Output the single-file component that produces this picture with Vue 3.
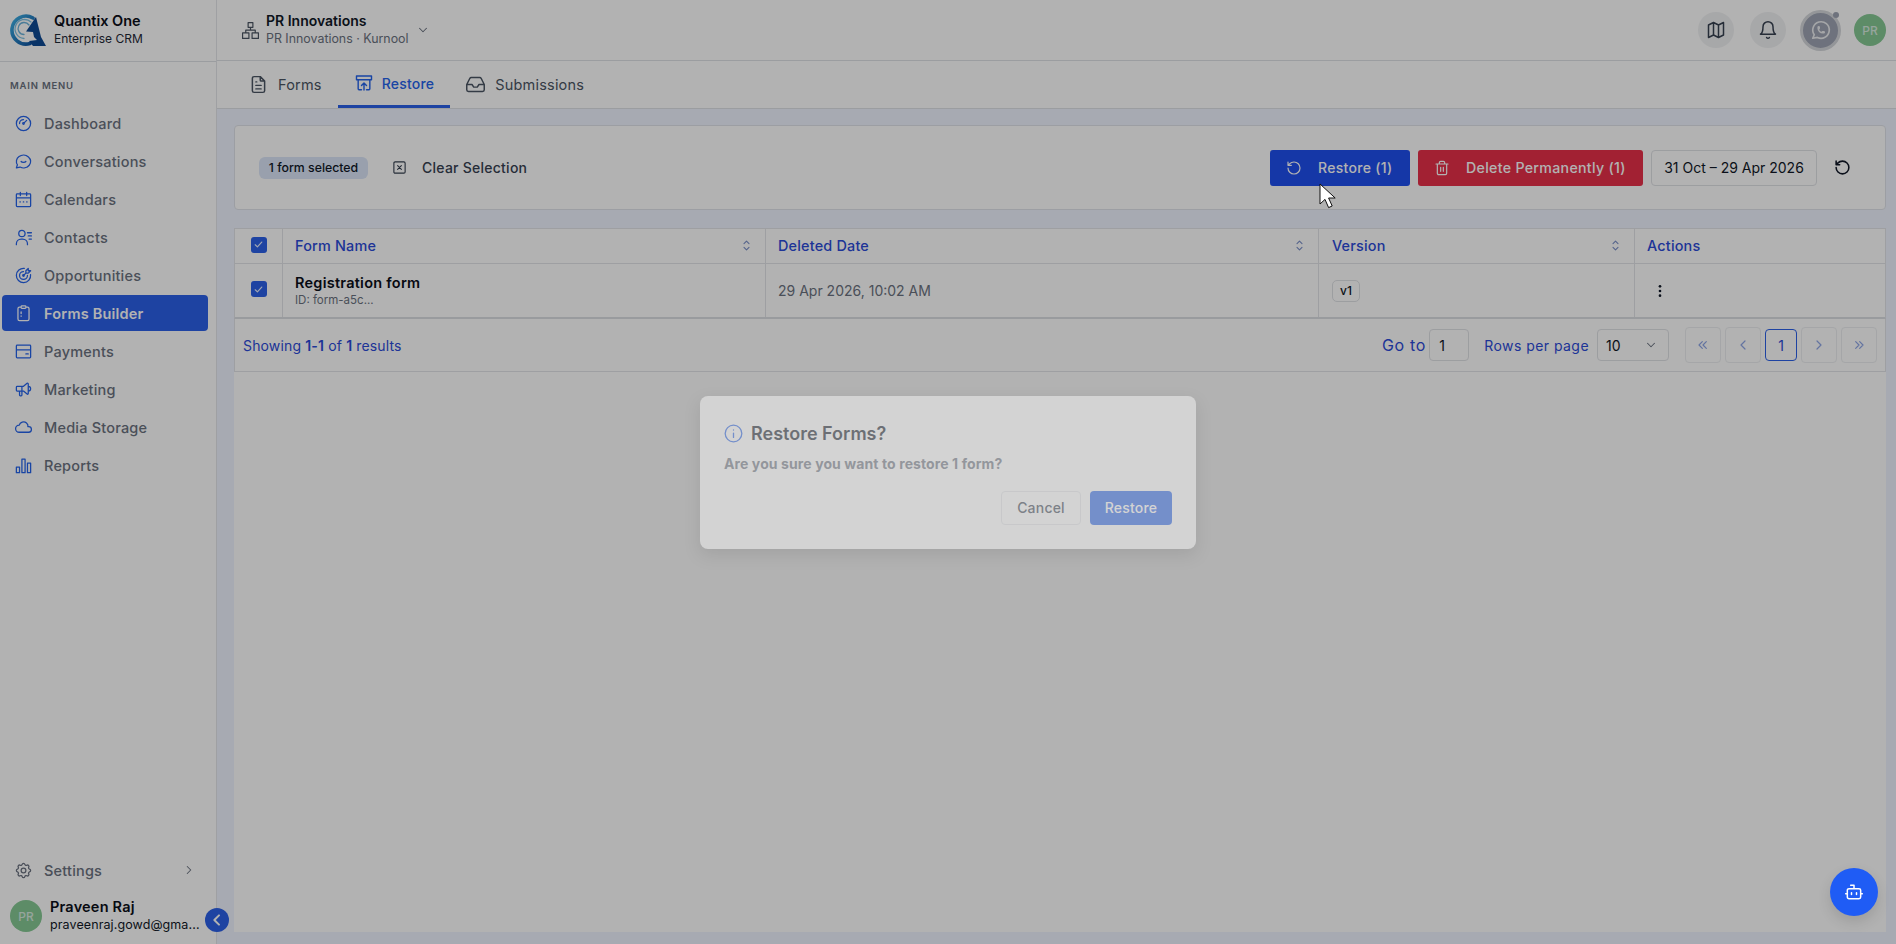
<script setup>
const menu = [
  { label: 'Dashboard', d: 'M12 12m-9 0a9 9 0 1 0 18 0a9 9 0 1 0 -18 0 M12 12m-1 0a1 1 0 1 0 2 0a1 1 0 1 0 -2 0 M13.41 10.59l2.59 -2.59 M7 12a5 5 0 0 1 5 -5' },
  { label: 'Conversations', d: 'M3 20l1.3 -3.9c-2.324 -3.437 -1.426 -7.872 2.1 -10.374c3.526 -2.501 8.59 -2.296 11.845 .48c3.255 2.777 3.695 7.266 1.029 10.501c-2.666 3.235 -7.615 4.215 -11.574 2.293l-4.7 1 M9 12c1 1.3 5 1.3 6 0' },
  { label: 'Calendars', d: 'M4 5h16a1 1 0 0 1 1 1v14a1 1 0 0 1 -1 1h-16a1 1 0 0 1 -1 -1v-14a1 1 0 0 1 1 -1z M3 10h18 M8 3v4 M16 3v4 M7.5 15h.5 M11.75 15h.5 M16 15h.5' },
  { label: 'Contacts', d: 'M10 7m-4 0a4 4 0 1 0 8 0a4 4 0 1 0 -8 0 M3 21v-1a6 6 0 0 1 6 -6h2a6 6 0 0 1 6 6v1 M17 6h5 M18 10h4 M19 14h3' },
  { label: 'Opportunities', d: 'M12 12m-1 0a1 1 0 1 0 2 0a1 1 0 1 0 -2 0 M12 7a5 5 0 1 0 5 5 M13 3.055a9 9 0 1 0 7.941 7.945 M15 6v3h3l3 -3h-3v-3z M15 9l-3 3' },
  { label: 'Forms Builder', active: true, d: 'M9 4h-2a2 2 0 0 0 -2 2v13a2 2 0 0 0 2 2h10a2 2 0 0 0 2 -2v-13a2 2 0 0 0 -2 -2h-2 M10 2.5h4a1 1 0 0 1 1 1v1a1 1 0 0 1 -1 1h-4a1 1 0 0 1 -1 -1v-1a1 1 0 0 1 1 -1z M9 10v2 M9 15v.5' },
  { label: 'Payments', d: 'M4 4h16a1 1 0 0 1 1 1v14a1 1 0 0 1 -1 1h-16a1 1 0 0 1 -1 -1v-14a1 1 0 0 1 1 -1z M3 10h18 M15 15h3' },
  { label: 'Marketing', d: 'M18 8a3 3 0 0 1 0 6 M10 8v11a1 1 0 0 1 -1 1h-1a1 1 0 0 1 -1 -1v-5 M12 8l4.524 -3.77a.9 .9 0 0 1 1.476 .692v12.156a.9 .9 0 0 1 -1.476 .692l-4.524 -3.77h-8a1 1 0 0 1 -1 -1v-4a1 1 0 0 1 1 -1h8' },
  { label: 'Media Storage', d: 'M6.657 18c-2.572 0 -4.657 -2.007 -4.657 -4.483c0 -2.475 2.085 -4.482 4.657 -4.482c.393 -1.762 1.794 -3.2 3.675 -3.773c1.88 -.572 3.956 -.193 5.444 1c1.488 1.19 2.162 3.007 1.77 4.769h.99c1.913 0 3.464 1.56 3.464 3.486c0 1.927 -1.551 3.487 -3.465 3.487h-11.878' },
  { label: 'Reports', d: 'M3 14h4v7h-4z M10 4h4v17h-4z M17 9h4v12h-4z' },
]

const sortIcon = 'M8 9l4 -4l4 4 M16 15l-4 4l-4 -4'
const columns = [
  { label: 'Form Name', sort: true },
  { label: 'Deleted Date', sort: true },
  { label: 'Version', sort: true },
  { label: 'Actions', sort: false },
]
</script>

<template>
  <div class="page">
    <aside class="sidebar">
      <div class="brand">
        <svg class="logo" viewBox="0 0 36 32" fill="none">
          <defs>
            <linearGradient id="lg" x1="0" y1="0" x2="1" y2="1">
              <stop offset="0" stop-color="#3fb4e8" />
              <stop offset="1" stop-color="#0d4f9e" />
            </linearGradient>
          </defs>
          <path d="M23 4A14 14 0 1 0 20 29.5" stroke="url(#lg)" stroke-width="3.6" />
          <path d="M21 8A9.5 9.5 0 1 0 14 24.5" stroke="#7fc2e4" stroke-width="1.3" />
          <path d="M19 11A6 6 0 1 0 14 20.5" stroke="#6ab2da" stroke-width="1.3" />
          <path d="M26 3L16 17.5L23 18L24 23L27 26L19 27L23 32H36L31 23Z" fill="#0e4a94" />
        </svg>
        <div class="brand-text">
          <div class="brand-name">Quantix One</div>
          <div class="brand-sub">Enterprise CRM</div>
        </div>
      </div>
      <div class="menu-title">MAIN MENU</div>
      <nav class="menu">
        <a v-for="item in menu" :key="item.label" class="menu-item" :class="{ active: item.active }">
          <svg class="menu-icon" viewBox="0 0 24 24"><path :d="item.d" /></svg>
          <span>{{ item.label }}</span>
        </a>
      </nav>
      <div class="side-bottom">
        <div class="settings">
          <svg class="settings-icon" viewBox="0 0 24 24"><path d="M10.325 4.317c.426 -1.756 2.924 -1.756 3.35 0a1.724 1.724 0 0 0 2.573 1.066c1.543 -.94 3.31 .826 2.37 2.37a1.724 1.724 0 0 0 1.065 2.572c1.756 .426 1.756 2.924 0 3.35a1.724 1.724 0 0 0 -1.066 2.573c.94 1.543 -.826 3.31 -2.37 2.37a1.724 1.724 0 0 0 -2.572 1.065c-.426 1.756 -2.924 1.756 -3.35 0a1.724 1.724 0 0 0 -2.573 -1.066c-1.543 .94 -3.31 -.826 -2.37 -2.37a1.724 1.724 0 0 0 -1.065 -2.572c-1.756 -.426 -1.756 -2.924 0 -3.35a1.724 1.724 0 0 0 1.066 -2.573c-.94 -1.543 .826 -3.31 2.37 -2.37c1 .608 2.296 .07 2.572 -1.065 M9 12a3 3 0 1 0 6 0a3 3 0 0 0 -6 0" /></svg>
          <span class="settings-label">Settings</span>
          <svg class="settings-chev" viewBox="0 0 24 24"><path d="M9 6l6 6l-6 6" /></svg>
        </div>
        <div class="user">
          <div class="avatar">PR</div>
          <div class="user-text">
            <div class="user-name">Praveen Raj</div>
            <div class="user-mail">praveenraj.gowd@gma...</div>
          </div>
        </div>
      </div>
      <button class="collapse">
        <svg viewBox="0 0 24 24"><path d="M15 5l-7 7l7 7" /></svg>
      </button>
    </aside>

    <div class="main">
      <header class="topbar">
        <svg class="org-icon" viewBox="0 0 24 24"><path d="M9 2h6v6h-6z M2 15h8v7h-8z M14 15h8v7h-8z M6 15v-3.5h12v3.5 M12 8v3.5" /></svg>
        <div class="org-text">
          <div class="org-name">PR Innovations</div>
          <div class="org-sub">PR Innovations · Kurnool</div>
        </div>
        <svg class="org-chev" viewBox="0 0 24 24"><path d="M6 9l6 6l6 -6" /></svg>
        <div class="top-actions">
          <span class="round">
            <svg viewBox="0 0 24 24"><path d="M9 3l-6 3v15l6 -3l6 3l6 -3v-15l-6 3l-6 -3z M9 3v15 M15 6v15" /></svg>
          </span>
          <span class="round">
            <svg viewBox="0 0 24 24"><path d="M6 8a6 6 0 0 1 12 0c0 7 3 9 3 9h-18s3 -2 3 -9 M10.3 21a1.94 1.94 0 0 0 3.4 0" /></svg>
          </span>
          <span class="whatsapp">
            <svg viewBox="0 0 24 24"><path d="M3 21l1.65 -3.8a9 9 0 1 1 3.4 2.9l-5.05 .9 M9 10a.5 .5 0 0 0 1 0v-1a.5 .5 0 0 0 -1 0v1a5 5 0 0 0 5 5h1a.5 .5 0 0 0 0 -1h-1a.5 .5 0 0 0 0 1" /></svg>
            <i class="dot"></i>
          </span>
          <span class="avatar">PR</span>
        </div>
      </header>

      <div class="tabs">
        <a class="tab tab-forms">
          <svg viewBox="0 0 24 24"><path d="M14 3v4a1 1 0 0 0 1 1h4 M17 21h-10a2 2 0 0 1 -2 -2v-14a2 2 0 0 1 2 -2h7l5 5v11a2 2 0 0 1 -2 2z M9 9h1 M9 13h6 M9 17h6" /></svg>
          Forms
        </a>
        <a class="tab tab-restore">
          <svg viewBox="0 0 24 24"><path d="M3 3.5h18v4.5h-18z M5 8v11a1 1 0 0 0 1 1h3 M19 8v11a1 1 0 0 1 -1 1h-3 M12 20.5v-8 M9 15l3 -3l3 3" /></svg>
          Restore
        </a>
        <a class="tab tab-sub">
          <svg viewBox="0 0 24 24"><path d="M22 12h-6l-2 3h-4l-2 -3h-6 M5.45 5.11l-3.45 6.89v6a2 2 0 0 0 2 2h16a2 2 0 0 0 2 -2v-6l-3.45 -6.89a2 2 0 0 0 -1.79 -1.11h-9.52a2 2 0 0 0 -1.79 1.11z" /></svg>
          Submissions
        </a>
      </div>

      <div class="content">
        <section class="toolbar">
          <span class="badge">1 form selected</span>
          <a class="clear">
            <svg viewBox="0 0 24 24"><path d="M5 3h14a2 2 0 0 1 2 2v14a2 2 0 0 1 -2 2h-14a2 2 0 0 1 -2 -2v-14a2 2 0 0 1 2 -2z M9 9l6 6 M15 9l-6 6" /></svg>
            Clear Selection
          </a>
          <div class="tool-right">
            <button class="btn btn-blue">
              <svg viewBox="0 0 24 24"><path d="M3 12a9 9 0 1 0 9 -9a9.75 9.75 0 0 0 -6.74 2.74l-2.26 2.26 M3 3v5h5" /></svg>
              Restore (1)
            </button>
            <button class="btn btn-red">
              <svg viewBox="0 0 24 24"><path d="M3 6h18 M19 6v14a2 2 0 0 1 -2 2h-10a2 2 0 0 1 -2 -2v-14 M8 6v-2a2 2 0 0 1 2 -2h4a2 2 0 0 1 2 2v2 M10 11v6 M14 11v6" /></svg>
              Delete Permanently (1)
            </button>
            <div class="date">31 Oct – 29 Apr 2026</div>
            <svg class="refresh" viewBox="0 0 24 24"><path d="M3 12a9 9 0 1 0 9 -9a9.75 9.75 0 0 0 -6.74 2.74l-2.26 2.26 M3 3v5h5" /></svg>
          </div>
        </section>

        <section class="panel">
          <div class="grid head">
            <div class="cell check-cell"><span class="check"><svg viewBox="0 0 24 24"><path d="M6 12.5l4 4l8 -9" /></svg></span></div>
            <div v-for="col in columns" :key="col.label" class="cell head-cell">
              <span>{{ col.label }}</span>
              <svg v-if="col.sort" class="sort" viewBox="0 0 24 24"><path :d="sortIcon" /></svg>
            </div>
          </div>
          <div class="grid row">
            <div class="cell check-cell"><span class="check"><svg viewBox="0 0 24 24"><path d="M6 12.5l4 4l8 -9" /></svg></span></div>
            <div class="cell name-cell">
              <div class="form-name">Registration form</div>
              <div class="form-id">ID: form-a5c...</div>
            </div>
            <div class="cell date-cell">29 Apr 2026, 10:02 AM</div>
            <div class="cell"><span class="version">v1</span></div>
            <div class="cell">
              <svg class="kebab" viewBox="0 0 24 24"><circle cx="12" cy="5" r="2" /><circle cx="12" cy="12" r="2" /><circle cx="12" cy="19" r="2" /></svg>
            </div>
          </div>
          <div class="pager">
            <div class="showing">Showing <b>1-1</b> of <b>1</b> results</div>
            <div class="pager-right">
              <span class="goto">Go to</span>
              <span class="goto-input">1</span>
              <span class="rows">Rows per page</span>
              <span class="rows-select">10
                <svg viewBox="0 0 24 24"><path d="M6 9l6 6l6 -6" /></svg>
              </span>
              <div class="pages">
                <span class="page-btn"><svg viewBox="0 0 24 24"><path d="M11 7l-5 5l5 5 M17 7l-5 5l5 5" /></svg></span>
                <span class="page-btn"><svg viewBox="0 0 24 24"><path d="M15 6l-6 6l6 6" /></svg></span>
                <span class="page-current">1</span>
                <span class="page-btn"><svg viewBox="0 0 24 24"><path d="M9 6l6 6l-6 6" /></svg></span>
                <span class="page-btn"><svg viewBox="0 0 24 24"><path d="M7 7l5 5l-5 5 M13 7l5 5l-5 5" /></svg></span>
              </div>
            </div>
          </div>
        </section>
      </div>
    </div>

    <div class="overlay"></div>

    <div class="dialog-wrap">
      <div class="dialog">
        <div class="dialog-title">
          <svg viewBox="0 0 24 24"><path d="M12 12m-9.5 0a9.5 9.5 0 1 0 19 0a9.5 9.5 0 1 0 -19 0 M12 16.5v-5 M12 8h.01" /></svg>
          Restore Forms?
        </div>
        <p class="dialog-body">Are you sure you want to restore 1 form?</p>
        <div class="dialog-actions">
          <button class="dlg-cancel">Cancel</button>
          <button class="dlg-ok">Restore</button>
        </div>
      </div>
    </div>

    <button class="fab">
      <svg viewBox="0 0 24 24"><path d="M12 8v-4h-4 M6 8h12a2 2 0 0 1 2 2v8a2 2 0 0 1 -2 2h-12a2 2 0 0 1 -2 -2v-8a2 2 0 0 1 2 -2z M2 14h2 M20 14h2 M15 13v2 M9 13v2" /></svg>
    </button>

    <svg class="cursor" viewBox="0 0 18 26">
      <path d="M1 1v20l5 -4.6l3.6 8.2l3.6 -1.6l-3.6 -8h6.6z" fill="#fff" stroke="#111" stroke-width="1" />
    </svg>
  </div>
</template>

<style>
body {
  margin: 0;
  overflow: hidden;
}
</style>

<style scoped>
.page {
  display: flex;
  height: 944px;
  width: 1896px;
  overflow: hidden;
  position: relative;
  background: #fff;
  color: #111827;
  font-family: Inter, "Noto Sans", sans-serif;
  font-size: 14px;
}
svg {
  fill: none;
  stroke: currentColor;
  stroke-width: 1.8;
  stroke-linecap: round;
  stroke-linejoin: round;
  flex: none;
}

/* sidebar */
.sidebar {
  width: 217px;
  flex: none;
  display: flex;
  flex-direction: column;
  position: relative;
  background: #fff;
  border-right: 1px solid #e4e6ea;
  box-sizing: border-box;
}
.brand {
  height: 62px;
  flex: none;
  box-sizing: border-box;
  padding: 0 0 2px 10px;
  display: flex;
  align-items: center;
  gap: 8px;
  border-bottom: 1px solid #dfe1e6;
}
.logo {
  width: 36px;
  height: 32px;
  stroke: none;
}
.brand-name {
  font-size: 14.5px;
  font-weight: 600;
  line-height: 18px;
  color: #0b0f19;
}
.brand-sub {
  font-size: 12px;
  line-height: 17px;
  color: #1f2937;
}
.menu-title {
  font-size: 9.5px;
  font-weight: 600;
  letter-spacing: 0.8px;
  color: #6b7280;
  padding: 18px 0 0 10px;
  line-height: 12px;
}
.menu {
  padding: 13px 8px 0 2px;
  display: flex;
  flex-direction: column;
  gap: 2px;
}
.menu-item {
  display: flex;
  align-items: center;
  height: 36px;
  gap: 11px;
  padding-left: 12px;
  border-radius: 4px;
  font-weight: 500;
  font-size: 14.5px;
  letter-spacing: 0.2px;
  color: #6b7280;
}
.menu-icon {
  width: 19px;
  height: 19px;
  color: #2563eb;
  stroke-width: 1.6;
}
.menu-item.active {
  background: #2b60e8;
  color: #fff;
  font-weight: 600;
}
.menu-item.active .menu-icon {
  color: #fff;
}
.side-bottom {
  margin-top: auto;
  padding-bottom: 10px;
}
.settings {
  display: flex;
  align-items: center;
  height: 36px;
  padding: 0 20px 0 14px;
  gap: 11px;
  color: #6b7280;
  font-weight: 500;
  font-size: 14.5px;
  letter-spacing: 0.2px;
}
.settings-icon {
  width: 19px;
  height: 19px;
  stroke-width: 1.6;
}
.settings-chev {
  width: 14px;
  height: 14px;
  margin-left: auto;
  color: #6b7280;
}
.user {
  display: flex;
  align-items: center;
  gap: 8px;
  padding: 10px 0 0 10px;
}
.avatar {
  width: 32px;
  height: 32px;
  border-radius: 50%;
  background: #86c994;
  color: #d7ece0;
  display: flex;
  align-items: center;
  justify-content: center;
  font-size: 12px;
  font-weight: 500;
  flex: none;
}
.user-name {
  font-size: 14.5px;
  font-weight: 600;
  line-height: 18px;
  letter-spacing: 0.2px;
  color: #0b0f19;
}
.user-mail {
  font-size: 12.5px;
  line-height: 18px;
  letter-spacing: 0.1px;
  color: #111827;
  white-space: nowrap;
}
.collapse {
  position: absolute;
  right: -13px;
  bottom: 12px;
  width: 24px;
  height: 24px;
  border-radius: 50%;
  border: none;
  padding: 0;
  background: #2b60e8;
  color: #fff;
  display: flex;
  align-items: center;
  justify-content: center;
  z-index: 2;
}
.collapse svg {
  width: 16px;
  height: 16px;
  stroke-width: 3;
}

/* top */
.main {
  flex: 1;
  min-width: 0;
  display: flex;
  flex-direction: column;
}
.topbar {
  height: 61px;
  flex: none;
  box-sizing: border-box;
  display: flex;
  align-items: center;
  padding: 0 10px 0 24px;
  border-bottom: 1px solid #dfe1e6;
}
.org-icon {
  width: 19px;
  height: 19px;
  color: #4b5563;
  stroke-width: 1.5;
  margin-right: 6px;
}
.org-name {
  font-size: 14px;
  font-weight: 600;
  line-height: 18px;
  color: #111827;
}
.org-sub {
  font-size: 12.4px;
  line-height: 18px;
  color: #6b7280;
}
.org-chev {
  width: 14px;
  height: 14px;
  margin-left: 7px;
  color: #6b7280;
}
.top-actions {
  margin-left: auto;
  display: flex;
  align-items: center;
}
.round {
  width: 36px;
  height: 36px;
  border-radius: 50%;
  background: #f0f1f3;
  color: #374151;
  display: flex;
  align-items: center;
  justify-content: center;
  margin-right: 16px;
}
.round svg {
  width: 20px;
  height: 20px;
}
.whatsapp {
  width: 41px;
  height: 41px;
  box-sizing: border-box;
  border-radius: 50%;
  border: 3px solid #d5d7db;
  background: #9ea4b3;
  color: #eceef1;
  display: flex;
  align-items: center;
  justify-content: center;
  position: relative;
  margin: 0 13px 0 -2px;
}
.whatsapp svg {
  width: 22px;
  height: 22px;
}
.dot {
  position: absolute;
  top: -1px;
  right: -1px;
  width: 6px;
  height: 6px;
  border-radius: 50%;
  background: #9ea4b3;
}

/* tabs */
.tabs {
  height: 48px;
  flex: none;
  box-sizing: border-box;
  display: flex;
  padding-left: 15px;
  border-bottom: 1px solid #dfe1e6;
}
.tab {
  display: flex;
  align-items: center;
  gap: 9px;
  height: 47px;
  box-sizing: border-box;
  padding: 0 16px;
  font-size: 14.5px;
  color: #4b5563;
  letter-spacing: 0.2px;
}
.tab svg {
  width: 21px;
  height: 21px;
  stroke-width: 1.7;
}
.tab-restore {
  color: #2563eb;
  font-weight: 500;
  border-bottom: 3px solid #2b60e8;
  font-size: 14px;
  gap: 8px;
}
.tab-restore svg {
  width: 20px;
  height: 20px;
}
.tab-sub {
  padding-left: 15px;
}

/* content */
.content {
  flex: 1;
  min-height: 0;
  background: #f0f4ff;
  padding: 16px 10px 12px 17px;
  display: flex;
  flex-direction: column;
  gap: 18px;
}
.toolbar {
  height: 85px;
  flex: none;
  box-sizing: border-box;
  background: #fff;
  border: 1px solid #e0e3ea;
  border-radius: 4px;
  display: flex;
  align-items: center;
  padding: 0 34px 0 24px;
}
.badge {
  background: #dbe5f8;
  border-radius: 6px;
  height: 22px;
  width: 109px;
  display: flex;
  align-items: center;
  justify-content: center;
  font-size: 12.3px;
  font-weight: 500;
  color: #111827;
}
.clear {
  display: flex;
  align-items: center;
  gap: 15px;
  margin-left: 24px;
  font-size: 14px;
  font-weight: 500;
  letter-spacing: 0.25px;
  color: #374151;
}
.clear svg {
  width: 15px;
  height: 15px;
}
.tool-right {
  margin-left: auto;
  display: flex;
  align-items: center;
  gap: 8px;
}
.btn {
  height: 36px;
  border: none;
  border-radius: 3px;
  color: #fff;
  display: flex;
  align-items: center;
  font: inherit;
  font-weight: 500;
  letter-spacing: 0.3px;
  padding: 0 16px;
  gap: 16px;
  white-space: nowrap;
}
.btn svg {
  width: 16px;
  height: 16px;
}
.btn-blue {
  width: 140px;
  background: #1f50f0;
}
.btn-red {
  width: 225px;
  background: #e9304a;
  font-size: 14.2px;
}
.date {
  width: 166px;
  height: 36px;
  box-sizing: border-box;
  border: 1px solid #e0e2e6;
  border-radius: 4px;
  display: flex;
  align-items: center;
  justify-content: center;
  font-size: 14px;
  color: #111827;
}
.refresh {
  width: 17px;
  height: 17px;
  margin-left: 9px;
  stroke-width: 2.2;
  color: #111827;
}

/* table */
.panel {
  flex: 1;
  min-height: 0;
  background: #fff;
}
.grid {
  display: grid;
  grid-template-columns: 48px 483px 553px 316px 1fr;
}
.head {
  height: 36px;
  border: 1px solid #e2e4e9;
  box-sizing: border-box;
}
.row {
  height: 55px;
  box-sizing: border-box;
  border: 1px solid #e2e4e9;
  border-top: none;
  border-bottom: 2px solid #dcdee3;
}
.cell {
  display: flex;
  align-items: center;
  padding: 0 12px;
  border-right: 1px solid #e2e4e9;
  min-width: 0;
}
.cell:nth-child(4) {
  padding-left: 13px;
}
.cell:last-child {
  border-right: none;
}
.check-cell {
  justify-content: center;
  padding: 0;
}
.check {
  width: 16px;
  height: 16px;
  border-radius: 3px;
  background: #2b60e8;
  color: #e5edff;
  display: flex;
  align-items: center;
  justify-content: center;
  margin-top: -3px;
}
.check svg {
  width: 13px;
  height: 13px;
  stroke-width: 2.2;
}
.head-cell {
  justify-content: space-between;
  color: #2c4bd8;
  font-weight: 500;
  font-size: 14.4px;
  letter-spacing: 0.2px;
  padding-bottom: 2px;
}
.sort {
  width: 15px;
  height: 15px;
  color: #7b90c8;
  margin-right: -1px;
}
.name-cell {
  flex-direction: column;
  align-items: flex-start;
  justify-content: center;
}
.form-name {
  font-size: 14.5px;
  font-weight: 600;
  line-height: 18px;
  color: #0b0f19;
  letter-spacing: 0.25px;
}
.form-id {
  font-size: 11.5px;
  line-height: 16px;
  color: #6b7280;
}
.date-cell {
  color: #6b7280;
}
.version {
  width: 28px;
  height: 22px;
  box-sizing: border-box;
  border: 1px solid #e0e2e6;
  border-radius: 5px;
  display: flex;
  align-items: center;
  justify-content: center;
  font-size: 12px;
  font-weight: 500;
}
.kebab {
  width: 16px;
  height: 16px;
  fill: #111827;
  stroke: none;
  margin-left: 5px;
}
.pager {
  height: 53px;
  box-sizing: border-box;
  display: flex;
  align-items: center;
  padding: 0 8px 0 8px;
  border: 1px solid #e2e4e9;
  border-top: none;
}
.showing {
  color: #2c4bd8;
  letter-spacing: 0.15px;
}
.showing b {
  font-weight: 600;
}
.pager-right {
  margin-left: auto;
  display: flex;
  align-items: center;
}
.goto {
  font-size: 16px;
  letter-spacing: 0.7px;
  color: #2c4bd8;
  margin-right: 3px;
}
.goto-input {
  width: 40px;
  height: 32px;
  box-sizing: border-box;
  border: 1px solid #e0e2e6;
  border-radius: 4px;
  display: flex;
  align-items: center;
  padding-left: 9px;
  color: #111827;
}
.rows {
  margin: 0 8px 0 15px;
  color: #2c4bd8;
  letter-spacing: 0.45px;
}
.rows-select {
  width: 72px;
  height: 32px;
  box-sizing: border-box;
  border: 1px solid #e0e2e6;
  border-radius: 4px;
  display: flex;
  align-items: center;
  justify-content: space-between;
  padding: 0 10px 0 8px;
  color: #111827;
}
.rows-select svg {
  width: 14px;
  height: 14px;
  color: #6b7280;
}
.pages {
  display: flex;
  align-items: center;
  gap: 4px;
  margin-left: 16px;
}
.page-btn {
  width: 36px;
  height: 36px;
  box-sizing: border-box;
  border: 1px solid #eceef1;
  border-radius: 4px;
  display: flex;
  align-items: center;
  justify-content: center;
  color: #8fa6e6;
}
.page-btn svg {
  width: 16px;
  height: 16px;
}
.page-current {
  width: 32px;
  height: 32px;
  box-sizing: border-box;
  border: 1px solid #2b60e8;
  border-radius: 4px;
  display: flex;
  align-items: center;
  justify-content: center;
  color: #2c4bd8;
}

/* overlay and dialog */
.overlay {
  position: absolute;
  inset: 0;
  background: rgba(0, 0, 0, 0.3);
  z-index: 10;
}
.dialog-wrap {
  position: absolute;
  inset: 0;
  z-index: 11;
  display: flex;
  align-items: center;
  justify-content: center;
}
.dialog {
  width: 496px;
  height: 153px;
  box-sizing: border-box;
  background: #fff;
  border-radius: 8px;
  padding: 24px;
  opacity: 0.43;
  box-shadow: 0 6px 16px rgba(0, 0, 0, 0.2);
}
.dialog-title {
  display: flex;
  align-items: center;
  gap: 7px;
  font-size: 18px;
  font-weight: 600;
  line-height: 26px;
  color: #111827;
  margin: 1px 0 0 -1px;
}
.dialog-title svg {
  width: 21px;
  height: 21px;
  color: #2563eb;
  stroke-width: 1.5;
}
.dialog-body {
  margin: 7px 0 0;
  font-size: 14px;
  font-weight: 700;
  line-height: 20px;
  color: #6b7280;
  letter-spacing: 0.1px;
}
.dialog-actions {
  display: flex;
  justify-content: flex-end;
  gap: 9px;
  margin-top: 17px;
}
.dlg-cancel,
.dlg-ok {
  height: 34px;
  border-radius: 4px;
  font: inherit;
  font-weight: 500;
  letter-spacing: 0.2px;
}
.dlg-cancel {
  width: 80px;
  background: #fff;
  border: 1px solid #e5e7eb;
  color: #374151;
}
.dlg-ok {
  width: 82px;
  background: #2563eb;
  border: none;
  color: #fff;
}
.fab {
  position: absolute;
  right: 18px;
  bottom: 28px;
  width: 48px;
  height: 48px;
  border: none;
  border-radius: 50%;
  padding: 0;
  background: #1f5cf5;
  color: #fff;
  display: flex;
  align-items: center;
  justify-content: center;
  z-index: 12;
  box-shadow: 0 6px 14px rgba(0, 0, 0, 0.12);
}
.fab svg {
  width: 20px;
  height: 20px;
}
.cursor {
  position: absolute;
  left: 1319px;
  top: 183px;
  width: 18px;
  height: 26px;
  z-index: 13;
  stroke-linecap: butt;
}
</style>
